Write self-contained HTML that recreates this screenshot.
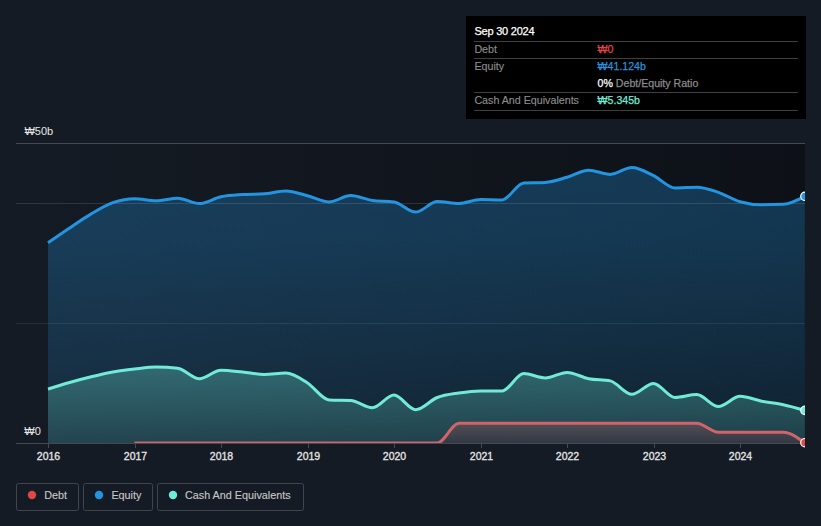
<!DOCTYPE html>
<html><head><meta charset="utf-8">
<style>
html,body{margin:0;padding:0;}
body{width:821px;height:526px;overflow:hidden;background:#151b24;font-family:"Liberation Sans",sans-serif;position:relative;}
svg{position:absolute;left:0;top:0;}
</style></head><body>
<svg width="821" height="526" viewBox="0 0 821 526">
<defs>
<linearGradient id="plotbg" x1="0" y1="0" x2="1" y2="0">
<stop offset="0" stop-color="#151b24"/><stop offset="1" stop-color="#0d1117"/>
</linearGradient>
<linearGradient id="eqfill" gradientUnits="userSpaceOnUse" x1="0" y1="167" x2="0" y2="443">
<stop offset="0" stop-color="#2394df" stop-opacity="0.30"/><stop offset="0.264" stop-color="#2394df" stop-opacity="0.282"/><stop offset="1" stop-color="#2394df" stop-opacity="0.12"/>
</linearGradient>
<linearGradient id="cashfill" gradientUnits="userSpaceOnUse" x1="0" y1="367" x2="0" y2="443">
<stop offset="0" stop-color="#71ebd7" stop-opacity="0.31"/><stop offset="1" stop-color="#71ebd7" stop-opacity="0.14"/>
</linearGradient>
<linearGradient id="debtfill" gradientUnits="userSpaceOnUse" x1="0" y1="423" x2="0" y2="443">
<stop offset="0" stop-color="#524e55"/><stop offset="1" stop-color="#333945"/>
</linearGradient>
<clipPath id="clip"><rect x="16" y="100" width="789" height="343.5"/></clipPath>
<clipPath id="clipd"><rect x="16" y="100" width="789" height="343"/></clipPath>
<clipPath id="clipdot"><rect x="0" y="0" width="805" height="526"/></clipPath>
</defs>
<rect x="16" y="143" width="789" height="300" fill="url(#plotbg)"/>
<line x1="16" y1="143.5" x2="805" y2="143.5" stroke="#44484f" stroke-width="1"/>
<path d="M48.00,242.80C55.21,237.81 62.42,232.82 69.62,228.00C76.83,223.18 84.04,218.12 91.25,213.90C98.46,209.68 105.67,205.23 112.88,202.70C120.08,200.17 127.29,198.70 134.50,198.70C141.71,198.70 148.92,200.80 156.12,200.80C163.33,200.80 170.54,198.20 177.75,198.20C184.96,198.20 192.17,203.60 199.38,203.60C206.58,203.60 213.79,198.27 221.00,196.80C228.21,195.33 235.42,195.10 242.62,194.60C249.83,194.10 257.04,194.33 264.25,193.80C271.46,193.27 278.67,190.90 285.88,190.90C293.08,190.90 300.29,193.97 307.50,195.80C314.71,197.63 321.92,201.90 329.12,201.90C336.33,201.90 343.54,195.60 350.75,195.60C357.96,195.60 365.17,199.40 372.38,200.40C379.58,201.40 386.79,200.90 394.00,201.90C401.21,202.90 408.42,212.10 415.62,212.10C422.83,212.10 430.04,201.60 437.25,201.60C444.46,201.60 451.67,203.60 458.88,203.60C466.08,203.60 473.29,199.50 480.50,199.50C487.71,199.50 494.92,199.90 502.12,199.90C509.33,199.90 516.54,183.23 523.75,182.90C530.96,182.57 538.17,182.73 545.38,182.40C552.58,182.07 559.79,179.33 567.00,177.30C574.21,175.27 581.42,170.20 588.62,170.20C595.83,170.20 603.04,174.40 610.25,174.40C617.46,174.40 624.67,167.50 631.88,167.50C639.08,167.50 646.29,172.18 653.50,175.60C660.71,179.02 667.92,188.00 675.12,188.00C682.33,188.00 689.54,187.20 696.75,187.20C703.96,187.20 711.17,189.88 718.38,192.30C725.58,194.72 732.79,199.63 740.00,201.70C747.21,203.77 754.42,204.80 761.62,204.80C768.83,204.80 776.04,204.63 783.25,204.30C790.46,203.97 797.67,200.13 804.88,196.30L804.88,443L48.00,443Z" fill="url(#eqfill)"/>
<path d="M48.00,389.00C55.21,386.77 62.42,384.53 69.62,382.50C76.83,380.47 84.04,378.55 91.25,376.80C98.46,375.05 105.67,373.30 112.88,372.00C120.08,370.70 127.29,369.83 134.50,369.00C141.71,368.17 148.92,367.00 156.12,367.00C163.33,367.00 170.54,367.43 177.75,368.30C184.96,369.17 192.17,378.70 199.38,378.70C206.58,378.70 213.79,370.20 221.00,370.20C228.21,370.20 235.42,371.30 242.62,372.00C249.83,372.70 257.04,374.40 264.25,374.40C271.46,374.40 278.67,373.10 285.88,373.10C293.08,373.10 300.29,378.43 307.50,382.90C314.71,387.37 321.92,399.57 329.12,399.90C336.33,400.23 343.54,400.07 350.75,400.40C357.96,400.73 365.17,407.70 372.38,407.70C379.58,407.70 386.79,395.00 394.00,395.00C401.21,395.00 408.42,409.70 415.62,409.70C422.83,409.70 430.04,400.28 437.25,397.50C444.46,394.72 451.67,394.10 458.88,393.00C466.08,391.90 473.29,390.90 480.50,390.90C487.71,390.90 494.92,390.90 502.12,390.90C509.33,390.90 516.54,373.60 523.75,373.60C530.96,373.60 538.17,378.00 545.38,378.00C552.58,378.00 559.79,372.40 567.00,372.40C574.21,372.40 581.42,377.28 588.62,378.70C595.83,380.12 603.04,379.43 610.25,380.90C617.46,382.37 624.67,394.30 631.88,394.30C639.08,394.30 646.29,383.40 653.50,383.40C660.71,383.40 667.92,397.50 675.12,397.50C682.33,397.50 689.54,394.60 696.75,394.60C703.96,394.60 711.17,406.50 718.38,406.50C725.58,406.50 732.79,396.30 740.00,396.30C747.21,396.30 754.42,399.78 761.62,401.20C768.83,402.62 776.04,403.27 783.25,404.80C790.46,406.33 797.67,408.37 804.88,410.40L804.88,443L48.00,443Z" fill="url(#cashfill)"/>
<path d="M134.50,443.00C141.71,443.00 148.92,443.00 156.12,443.00C163.33,443.00 170.54,443.00 177.75,443.00C184.96,443.00 192.17,443.00 199.38,443.00C206.58,443.00 213.79,443.00 221.00,443.00C228.21,443.00 235.42,443.00 242.62,443.00C249.83,443.00 257.04,443.00 264.25,443.00C271.46,443.00 278.67,443.00 285.88,443.00C293.08,443.00 300.29,443.00 307.50,443.00C314.71,443.00 321.92,443.00 329.12,443.00C336.33,443.00 343.54,443.00 350.75,443.00C357.96,443.00 365.17,443.00 372.38,443.00C379.58,443.00 386.79,443.00 394.00,443.00C401.21,443.00 408.42,443.00 415.62,443.00C422.83,443.00 430.04,443.00 437.25,443.00C444.46,443.00 451.67,423.30 458.88,423.30C466.08,423.30 473.29,423.30 480.50,423.30C487.71,423.30 494.92,423.30 502.12,423.30C509.33,423.30 516.54,423.30 523.75,423.30C530.96,423.30 538.17,423.30 545.38,423.30C552.58,423.30 559.79,423.30 567.00,423.30C574.21,423.30 581.42,423.30 588.62,423.30C595.83,423.30 603.04,423.30 610.25,423.30C617.46,423.30 624.67,423.30 631.88,423.30C639.08,423.30 646.29,423.30 653.50,423.30C660.71,423.30 667.92,423.30 675.12,423.30C682.33,423.30 689.54,423.30 696.75,423.30C703.96,423.30 711.17,432.30 718.38,432.30C725.58,432.30 732.79,432.30 740.00,432.30C747.21,432.30 754.42,432.30 761.62,432.30C768.83,432.30 776.04,432.30 783.25,432.30C790.46,432.30 797.67,437.65 804.88,443.00L804.88,443L134.50,443Z" fill="url(#debtfill)"/>
<line x1="16" y1="203.5" x2="805" y2="203.5" stroke="#ffffff" stroke-opacity="0.12" stroke-width="1"/>
<line x1="16" y1="323.5" x2="805" y2="323.5" stroke="#ffffff" stroke-opacity="0.08" stroke-width="1"/>
<g clip-path="url(#clip)">
<path d="M48.00,242.80C55.21,237.81 62.42,232.82 69.62,228.00C76.83,223.18 84.04,218.12 91.25,213.90C98.46,209.68 105.67,205.23 112.88,202.70C120.08,200.17 127.29,198.70 134.50,198.70C141.71,198.70 148.92,200.80 156.12,200.80C163.33,200.80 170.54,198.20 177.75,198.20C184.96,198.20 192.17,203.60 199.38,203.60C206.58,203.60 213.79,198.27 221.00,196.80C228.21,195.33 235.42,195.10 242.62,194.60C249.83,194.10 257.04,194.33 264.25,193.80C271.46,193.27 278.67,190.90 285.88,190.90C293.08,190.90 300.29,193.97 307.50,195.80C314.71,197.63 321.92,201.90 329.12,201.90C336.33,201.90 343.54,195.60 350.75,195.60C357.96,195.60 365.17,199.40 372.38,200.40C379.58,201.40 386.79,200.90 394.00,201.90C401.21,202.90 408.42,212.10 415.62,212.10C422.83,212.10 430.04,201.60 437.25,201.60C444.46,201.60 451.67,203.60 458.88,203.60C466.08,203.60 473.29,199.50 480.50,199.50C487.71,199.50 494.92,199.90 502.12,199.90C509.33,199.90 516.54,183.23 523.75,182.90C530.96,182.57 538.17,182.73 545.38,182.40C552.58,182.07 559.79,179.33 567.00,177.30C574.21,175.27 581.42,170.20 588.62,170.20C595.83,170.20 603.04,174.40 610.25,174.40C617.46,174.40 624.67,167.50 631.88,167.50C639.08,167.50 646.29,172.18 653.50,175.60C660.71,179.02 667.92,188.00 675.12,188.00C682.33,188.00 689.54,187.20 696.75,187.20C703.96,187.20 711.17,189.88 718.38,192.30C725.58,194.72 732.79,199.63 740.00,201.70C747.21,203.77 754.42,204.80 761.62,204.80C768.83,204.80 776.04,204.63 783.25,204.30C790.46,203.97 797.67,200.13 804.88,196.30" fill="none" stroke="#2394df" stroke-width="3" stroke-linecap="butt"/>
<path d="M48.00,389.00C55.21,386.77 62.42,384.53 69.62,382.50C76.83,380.47 84.04,378.55 91.25,376.80C98.46,375.05 105.67,373.30 112.88,372.00C120.08,370.70 127.29,369.83 134.50,369.00C141.71,368.17 148.92,367.00 156.12,367.00C163.33,367.00 170.54,367.43 177.75,368.30C184.96,369.17 192.17,378.70 199.38,378.70C206.58,378.70 213.79,370.20 221.00,370.20C228.21,370.20 235.42,371.30 242.62,372.00C249.83,372.70 257.04,374.40 264.25,374.40C271.46,374.40 278.67,373.10 285.88,373.10C293.08,373.10 300.29,378.43 307.50,382.90C314.71,387.37 321.92,399.57 329.12,399.90C336.33,400.23 343.54,400.07 350.75,400.40C357.96,400.73 365.17,407.70 372.38,407.70C379.58,407.70 386.79,395.00 394.00,395.00C401.21,395.00 408.42,409.70 415.62,409.70C422.83,409.70 430.04,400.28 437.25,397.50C444.46,394.72 451.67,394.10 458.88,393.00C466.08,391.90 473.29,390.90 480.50,390.90C487.71,390.90 494.92,390.90 502.12,390.90C509.33,390.90 516.54,373.60 523.75,373.60C530.96,373.60 538.17,378.00 545.38,378.00C552.58,378.00 559.79,372.40 567.00,372.40C574.21,372.40 581.42,377.28 588.62,378.70C595.83,380.12 603.04,379.43 610.25,380.90C617.46,382.37 624.67,394.30 631.88,394.30C639.08,394.30 646.29,383.40 653.50,383.40C660.71,383.40 667.92,397.50 675.12,397.50C682.33,397.50 689.54,394.60 696.75,394.60C703.96,394.60 711.17,406.50 718.38,406.50C725.58,406.50 732.79,396.30 740.00,396.30C747.21,396.30 754.42,399.78 761.62,401.20C768.83,402.62 776.04,403.27 783.25,404.80C790.46,406.33 797.67,408.37 804.88,410.40" fill="none" stroke="#71ebd7" stroke-width="3" stroke-linecap="butt"/>
</g>
<line x1="16" y1="443.5" x2="805" y2="443.5" stroke="#454a52" stroke-width="1"/>
<g clip-path="url(#clipd)">
<path d="M134.50,443.00C141.71,443.00 148.92,443.00 156.12,443.00C163.33,443.00 170.54,443.00 177.75,443.00C184.96,443.00 192.17,443.00 199.38,443.00C206.58,443.00 213.79,443.00 221.00,443.00C228.21,443.00 235.42,443.00 242.62,443.00C249.83,443.00 257.04,443.00 264.25,443.00C271.46,443.00 278.67,443.00 285.88,443.00C293.08,443.00 300.29,443.00 307.50,443.00C314.71,443.00 321.92,443.00 329.12,443.00C336.33,443.00 343.54,443.00 350.75,443.00C357.96,443.00 365.17,443.00 372.38,443.00C379.58,443.00 386.79,443.00 394.00,443.00C401.21,443.00 408.42,443.00 415.62,443.00C422.83,443.00 430.04,443.00 437.25,443.00C444.46,443.00 451.67,423.30 458.88,423.30C466.08,423.30 473.29,423.30 480.50,423.30C487.71,423.30 494.92,423.30 502.12,423.30C509.33,423.30 516.54,423.30 523.75,423.30C530.96,423.30 538.17,423.30 545.38,423.30C552.58,423.30 559.79,423.30 567.00,423.30C574.21,423.30 581.42,423.30 588.62,423.30C595.83,423.30 603.04,423.30 610.25,423.30C617.46,423.30 624.67,423.30 631.88,423.30C639.08,423.30 646.29,423.30 653.50,423.30C660.71,423.30 667.92,423.30 675.12,423.30C682.33,423.30 689.54,423.30 696.75,423.30C703.96,423.30 711.17,432.30 718.38,432.30C725.58,432.30 732.79,432.30 740.00,432.30C747.21,432.30 754.42,432.30 761.62,432.30C768.83,432.30 776.04,432.30 783.25,432.30C790.46,432.30 797.67,437.65 804.88,443.00" fill="none" stroke="#d0646a" stroke-width="3" stroke-linecap="butt"/>
</g>
<g stroke="#454a52" stroke-width="1">
<line x1="48.5" y1="443" x2="48.5" y2="448"/>
<line x1="135.5" y1="443" x2="135.5" y2="448"/>
<line x1="221.5" y1="443" x2="221.5" y2="448"/>
<line x1="308.5" y1="443" x2="308.5" y2="448"/>
<line x1="394.5" y1="443" x2="394.5" y2="448"/>
<line x1="481.5" y1="443" x2="481.5" y2="448"/>
<line x1="567.5" y1="443" x2="567.5" y2="448"/>
<line x1="654.5" y1="443" x2="654.5" y2="448"/>
<line x1="740.5" y1="443" x2="740.5" y2="448"/>
</g>
<g clip-path="url(#clipdot)">
<circle cx="804.9" cy="196.3" r="4.2" fill="#2394df" stroke="#ffffff" stroke-width="1.2"/>
<circle cx="804.9" cy="410.4" r="4.2" fill="#71ebd7" stroke="#ffffff" stroke-width="1.2"/>
<circle cx="804.9" cy="442.7" r="4.2" fill="#e84545" stroke="#ffffff" stroke-width="1.2"/>
</g>
<g font-family="'Liberation Sans', sans-serif" font-size="11" fill="#e6e6e6">
<text x="24.4" y="135.2">₩50b</text>
<text x="24.3" y="435.2">₩0</text>
</g>
<g font-family="'Liberation Sans', sans-serif" font-size="10.5" fill="#e6e6e6" stroke="#e6e6e6" stroke-width="0.3" text-anchor="middle">
<text x="48.5" y="459.8">2016</text>
<text x="135.5" y="459.8">2017</text>
<text x="221.5" y="459.8">2018</text>
<text x="308.5" y="459.8">2019</text>
<text x="394.5" y="459.8">2020</text>
<text x="481.5" y="459.8">2021</text>
<text x="567.5" y="459.8">2022</text>
<text x="654.5" y="459.8">2023</text>
<text x="740.5" y="459.8">2024</text>
</g>
</svg>
<svg width="821" height="526" viewBox="0 0 821 526" style="position:absolute;left:0;top:0">
<rect x="466" y="16" width="340" height="103" fill="#000"/>
<g fill="#404040">
<rect x="474" y="41" width="324" height="1"/>
<rect x="474" y="58" width="324" height="1"/>
<rect x="474" y="92" width="324" height="1"/>
<rect x="474" y="110" width="324" height="1"/>
</g>
<text x="474.4" y="35.3" font-family="'Liberation Sans', sans-serif" font-size="11" fill="#ffffff" stroke="#ffffff" stroke-width="0.25" letter-spacing="-0.22">Sep 30 2024</text>
<g font-family="'Liberation Sans', sans-serif" font-size="10.7" fill="#8e8e8e" stroke="#8e8e8e" stroke-width="0.12">
<text x="474.4" y="53">Debt</text>
<text x="474.4" y="70">Equity</text>
<text x="474.4" y="104.1">Cash And Equivalents</text>
</g>
<g font-family="'Liberation Sans', sans-serif" font-size="10.6" stroke-width="0.25">
<text x="597.6" y="52.8" fill="#e14646" stroke="#e14646">₩0</text>
<text x="597.6" y="70.1" fill="#2394df" stroke="#2394df">₩41.124b</text>
<text x="597.6" y="86.8" fill="#8b8b8b" stroke="#8b8b8b"><tspan fill="#ffffff" stroke="#ffffff">0%</tspan> Debt/Equity Ratio</text>
<text x="597.6" y="104.1" fill="#71ebd7" stroke="#71ebd7">₩5.345b</text>
</g>
<g fill="none" stroke="#40454d" stroke-width="1">
<rect x="16.5" y="483.5" width="62" height="27" rx="2"/>
<rect x="83.5" y="483.5" width="69" height="27" rx="2"/>
<rect x="157.5" y="483.5" width="146" height="27" rx="2"/>
</g>
<circle cx="32" cy="495" r="4.2" fill="#e04848"/>
<circle cx="99" cy="495" r="4.2" fill="#2394df"/>
<circle cx="173" cy="495" r="4.2" fill="#71ebd7"/>
<g font-family="'Liberation Sans', sans-serif" font-size="10.8" fill="#c8c8c8" stroke="#c8c8c8" stroke-width="0.12">
<text x="44.3" y="499.4">Debt</text>
<text x="111.4" y="499.4">Equity</text>
<text x="185" y="499.4">Cash And Equivalents</text>
</g>
</svg>
</body></html>
